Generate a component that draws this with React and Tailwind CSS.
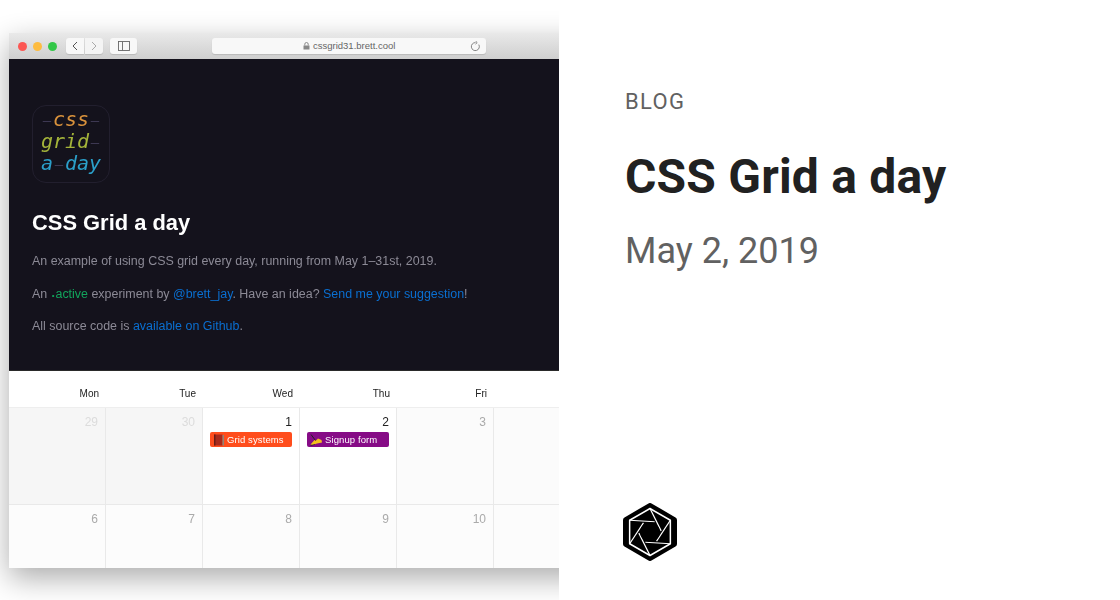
const days = ["Mon", "Tue", "Wed", "Thu", "Fri"];

function Book() {
  return (
    <svg width="12" height="12" viewBox="0 0 12 12" className="shrink-0">
      <rect x="1" y="0.5" width="8.5" height="11" fill="#a82a1c" />
      <rect x="9.5" y="1" width="1.5" height="10.5" fill="#8d8478" />
      <rect x="1" y="0.5" width="1.5" height="11" fill="#6d1c14" />
    </svg>
  );
}

function Hand() {
  return (
    <svg width="13" height="12" viewBox="0 0 13 12" className="shrink-0">
      <path d="M0.5 10.5 L4.5 6 L6 6.5 L8 4.5 L11.5 6 L12 8.5 L7 9.5 L2.5 11 Z" fill="#f3c01c" />
      <path d="M1 0.5 L5.5 6.5" stroke="#222" strokeWidth="1" fill="none" />
      <path d="M0.5 11.5 L5 10.5" stroke="#222" strokeWidth="0.7" />
    </svg>
  );
}

function Event({ bg, icon, label }) {
  return (
    <div className={`mx-[7px] mt-[3px] flex h-[15px] items-center gap-[2px] rounded-[2px] pl-[3px] text-[9.5px] leading-none tracking-[0.1px] text-white ${bg}`}>
      {icon}
      <span>{label}</span>
    </div>
  );
}

function Cell({ n, bg, tone, h, event }) {
  return (
    <div className={`border-r border-[#e9e9e9] ${bg} ${h}`}>
      <div className={`pr-[7px] pt-[7px] text-right text-[12px] leading-[14px] ${tone}`}>{n}</div>
      {event}
    </div>
  );
}

function Dash() {
  return <span className="inline-block w-[12px] -translate-y-[1px] text-center text-[14px] not-italic text-[#3f3a55]">–</span>;
}

function Logo() {
  const cx = 27, cy = 29, R = 23.5, r = 10.5;
  const tilt = Math.asin(r / R);
  const verts = [0, 1, 2, 3, 4, 5].map((i) => {
    const a = (Math.PI / 180) * (60 * i - 90);
    return [cx + R * Math.cos(a), cy + R * Math.sin(a), a];
  });
  return (
    <svg width="54" height="58" viewBox="0 0 54 58">
      <path d="M27 3 L51 17 L51 41 L27 55 L3 41 L3 17 Z" fill="#000" stroke="#000" strokeWidth="6" strokeLinejoin="round" />
      <polygon points={verts.map((p) => `${p[0]},${p[1]}`).join(" ")} fill="none" stroke="#fff" strokeWidth="1.5" strokeLinejoin="round" />
      {verts.map((p, i) => {
        const d = p[2] + Math.PI - tilt;
        const len = Math.sqrt(R * R - r * r) + 4;
        return <line key={i} x1={p[0]} y1={p[1]} x2={p[0] + len * Math.cos(d)} y2={p[1] + len * Math.sin(d)} stroke="#fff" strokeWidth="1.2" />;
      })}
      <circle cx={cx} cy={cy} r={r - 0.5} fill="#000" />
    </svg>
  );
}

export default function App() {
  return (
    <div className="flex h-[600px] w-[1120px] bg-white font-['Roboto',sans-serif]">
      <div className="h-[600px] w-[559px] shrink-0 overflow-hidden pl-[9px] pt-[33px]">
        <div className="w-[620px] font-['Liberation_Sans',sans-serif] shadow-[0_10px_28px_rgba(0,0,0,0.33)]">
          <div className="blur-[0.45px]">
            <div className="flex h-[26px] items-center bg-gradient-to-b from-[#e9e9e9] to-[#cfcfcf] pl-[9px]">
              <span className="h-[9px] w-[9px] rounded-full bg-[#fc5753]" />
              <span className="ml-[6px] h-[9px] w-[9px] rounded-full bg-[#fdbc40]" />
              <span className="ml-[6px] h-[9px] w-[9px] rounded-full bg-[#33c748]" />
              <div className="ml-[9px] flex h-[16px] w-[18px] items-center justify-center rounded-l-[3px] bg-[#f8f8f8] shadow-[0_1px_1px_rgba(0,0,0,0.12)]">
                <svg width="8" height="10" viewBox="0 0 8 10"><path d="M6 1 L2 5 L6 9" fill="none" stroke="#555" strokeWidth="1" /></svg>
              </div>
              <div className="ml-px flex h-[16px] w-[18px] items-center justify-center rounded-r-[3px] bg-[#f4f4f4] shadow-[0_1px_1px_rgba(0,0,0,0.12)]">
                <svg width="8" height="10" viewBox="0 0 8 10"><path d="M2 1 L6 5 L2 9" fill="none" stroke="#aaa" strokeWidth="1" /></svg>
              </div>
              <div className="ml-[7px] flex h-[16px] w-[27px] items-center justify-center rounded-[3px] bg-[#f8f8f8] shadow-[0_1px_1px_rgba(0,0,0,0.12)]">
                <svg width="12" height="10" viewBox="0 0 12 10"><rect x="0.5" y="0.5" width="11" height="9" fill="none" stroke="#666" strokeWidth="0.9" /><path d="M4.5 0.5 V9.5" stroke="#666" strokeWidth="0.9" /></svg>
              </div>
              <div className="ml-[75px] flex h-[16px] w-[274px] items-center rounded-[3px] bg-[#f8f8f8] pl-[91px] pr-[5px] text-[9.5px] text-[#666] shadow-[0_1px_1px_rgba(0,0,0,0.12)]">
                <svg width="7" height="8" viewBox="0 0 7 8" className="mr-[3px]"><rect x="0.5" y="3.5" width="6" height="4" fill="#888" /><path d="M1.8 3.5 V2.2 A1.7 1.7 0 0 1 5.2 2.2 V3.5" fill="none" stroke="#888" /></svg>
                <span>cssgrid31.brett.cool</span>
                <svg width="11" height="11" viewBox="0 0 11 11" className="ml-auto"><path d="M8.8 3.6 A4 4 0 1 1 5.5 1.6 M5.5 0 L7.2 1.6 L5.5 3.1" fill="none" stroke="#777" strokeWidth="0.9" /></svg>
              </div>
            </div>
            <div className="h-[312px] border-b border-[#2a2a2a] bg-[#14121c] pl-[23px] pt-[46px]">
              <div className="flex h-[78px] w-[78px] flex-col items-center rounded-[14px] border border-[#221f2e] pt-[2px] font-['DejaVu_Sans_Mono',monospace] text-[20px] italic leading-[22px]">
                <div className="h-[22px]"><Dash /><span className="text-[#d9923c]">css</span><Dash /></div>
                <div className="h-[22px]"><span className="text-[#a5b53a]">grid</span><Dash /></div>
                <div className="h-[22px]"><span className="text-[#2b9fc9]">a</span><Dash /><span className="text-[#2b9fc9]">day</span></div>
              </div>
              <h2 className="mt-[25px] text-[21.9px] font-bold leading-[30px] text-white">CSS Grid a day</h2>
              <div className="text-[12.45px] leading-[15px] text-[#8c8a96]">
                <p className="mt-[16px]">An example of using CSS grid every day, running from May 1–31st, 2019.</p>
                <p className="mt-[18px]">An <span className="text-[#12a45c]"><span className="mx-px text-[8px]">•</span>active</span> experiment by <span className="text-[#0a6fd1]">@brett_jay</span>. Have an idea? <span className="text-[#0a6fd1]">Send me your suggestion</span>!</p>
                <p className="mt-[16px]">All source code is <span className="text-[#0a6fd1]">available on Github</span>.</p>
              </div>
            </div>
            <div className="grid h-[37px] grid-cols-[97px_97px_97px_97px_97px_1fr] border-b border-[#eeeeee] bg-white text-[10px] leading-[46px] text-[#222]">
              {days.map((d) => (
                <div key={d} className="pr-[7px] text-right">{d}</div>
              ))}
              <div />
            </div>
            <div className="grid grid-cols-[97px_97px_97px_97px_97px_1fr]">
              <Cell n="29" bg="bg-[#f6f6f6]" tone="text-[#dcdcdc]" h="h-[96px]" />
              <Cell n="30" bg="bg-[#f6f6f6]" tone="text-[#dcdcdc]" h="h-[96px]" />
              <Cell n="1" bg="bg-white" tone="text-[#222]" h="h-[96px]" event={<Event bg="bg-[#ff4d1c]" icon={<Book />} label="Grid systems" />} />
              <Cell n="2" bg="bg-white" tone="text-[#222]" h="h-[96px]" event={<Event bg="bg-[#860b86]" icon={<Hand />} label="Signup form" />} />
              <Cell n="3" bg="bg-[#fbfbfb]" tone="text-[#aaaaaa]" h="h-[96px]" />
              <div className="h-[96px] bg-[#fbfbfb]" />
            </div>
            <div className="grid grid-cols-[97px_97px_97px_97px_97px_1fr] border-t border-[#e9e9e9]">
              {["6", "7", "8", "9", "10"].map((n) => (
                <Cell key={n} n={n} bg="bg-[#fcfcfc]" tone="text-[#aaaaaa]" h="h-[63px]" />
              ))}
              <div className="h-[63px] bg-[#fcfcfc]" />
            </div>
          </div>
        </div>
      </div>
      <div className="flex flex-1 flex-col pl-[66px]">
        <div className="mt-[89px] text-[22px] leading-[26px] tracking-[1.35px] text-[#616161]">BLOG</div>
        <h1 className="mt-[33px] text-[48px] font-bold leading-[58px] tracking-[0.2px] text-[#212121]">CSS Grid a day</h1>
        <div className="mt-[23px] text-[36px] leading-[44px] text-[#616161]">May 2, 2019</div>
        <div className="-ml-[2px] mt-[230px]"><Logo /></div>
      </div>
    </div>
  );
}
